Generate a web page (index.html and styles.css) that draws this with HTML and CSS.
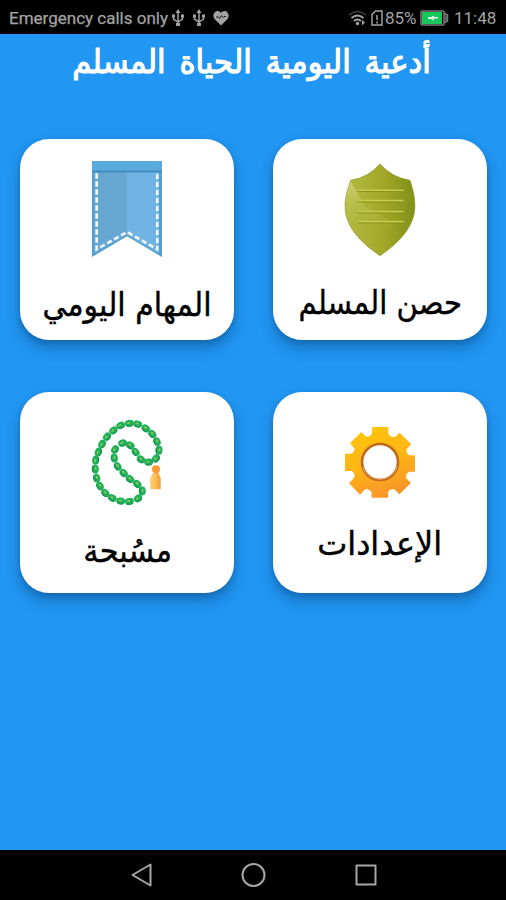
FILE: index.html
```html
<!DOCTYPE html>
<html lang="ar">
<head>
<meta charset="utf-8">
<title>أدعية اليومية الحياة المسلم</title>
<link rel="stylesheet" href="styles.css">
</head>
<body>
<header class="status">
  <span class="carrier">Emergency calls only</span>
  <svg class="usb" width="12" height="18" viewBox="0 0 12 18"><path d="M6 3v13M1.500 7v3L6 13l4.500-3V7" /><path class="fill" d="M6 0l2.500 4h-5zM0 5.500h3v3H0zM9 5.500h3v3H9zM4 14h4v3H4z"/></svg>
  <svg class="usb second" width="12" height="18" viewBox="0 0 12 18"><path d="M6 3v13M1.500 7v3L6 13l4.500-3V7" /><path class="fill" d="M6 0l2.500 4h-5zM0 5.500h3v3H0zM9 5.500h3v3H9zM4 14h4v3H4z"/></svg>
  <svg class="heart" width="16" height="15" viewBox="0 0 16 15"><path class="fill" d="M8 14.500L1.500 8C-1.500 4 2 0 4.500 0 6.500 0 7.500 1 8 2 8.500 1 9.500 0 11.500 0 14 0 17.500 4 14.500 8z"/><path class="pulse" d="M3 6h2.500l1 1.500 2-3L10 6.500l1-1h2"/></svg>
  <svg class="wifi" width="20" height="18" viewBox="0 0 20 18"><path class="dim" d="M1 6Q9.500-1 18 6"/><path class="wave" d="M3.500 9Q9.500 4 15.500 9M6 12q3.500-3 7 0"/><circle class="fill" cx="9.500" cy="14.500" r="1.700"/><path class="fill" d="M14 11l3 2.500-3 3z"/></svg>
  <svg class="sim" width="12" height="16" viewBox="0 0 12 16"><path d="M4.500 1H11v14H1V4.500zM6 5v5M6 11.500v2"/></svg>
  <span class="percent">85%</span>
  <svg class="battery" width="29" height="16" viewBox="0 0 29 16"><rect x="1" y="1" width="23" height="14" rx="1"/><rect class="charge" x="2" y="2" width="20" height="12"/><path class="cap" d="M24 3l2 1v8l-2 1"/><path class="cap" d="M27.500 4v8"/><path class="bolt" d="M8 7h4V5.500l3 1.500h3v1.500h-4v2L11 9H8z"/></svg>
  <span class="clock">11:48</span>
</header>
<main dir="rtl">
  <h1><span>أدعية اليومية الحياة المسلم</span></h1>
  <section class="grid">
    <article class="card shield">
      <svg class="icon" width="72" height="94" viewBox="0 0 216 282">
        <defs>
          <linearGradient id="olive" x1="0" y1="0" x2="1" y2="0"><stop offset="0" stop-color="#b4bb42"/><stop offset=".55" stop-color="#a1a727"/><stop offset="1" stop-color="#809018"/></linearGradient>
          <linearGradient id="shine" x1="0" y1="0" x2="0" y2="1"><stop offset="0" stop-color="#d1d47f" stop-opacity=".8"/><stop offset="1" stop-color="#b4bb42" stop-opacity="0"/></linearGradient>
        </defs>
        <path d="M108 3Q145 44 198 52C208 83 215 112 212 142C205 202 154 247 108 278C62 247 10 202 4 142C1 112 9 83 20 52Q72 44 108 3Z" fill="url(#olive)" stroke="#8a931e" stroke-width="2"/>
        <path d="M20 55L62 130Q115 155 155 195L80 205Q6 175 5 125Q7 82 20 55Z" fill="url(#shine)"/>
        <path d="M41 85h138M41 116h138M41 149h138M41 179h138" stroke="#74801a" stroke-width="4"/>
        <path d="M41 82h138M41 113h138M41 146h138M41 176h138" stroke="#c8cd49" stroke-width="5"/>
      </svg>
      <p><span>حصن المسلم</span></p>
    </article>
    <article class="card ribbon">
      <svg class="icon" width="70" height="96" viewBox="0 0 210 288">
        <path d="M0 0h210v288L105 226 0 288z" fill="#549fcf"/>
        <path d="M5 35h100v186L5 279z" fill="#68a6d2"/>
        <path d="M105 35h94v241L105 221z" fill="#70b3e4"/>
        <path d="M0 0h210v30H0z" fill="#5aaade"/><path d="M0 31h210" stroke="#438dbb" stroke-width="5"/>
        <path d="M14 37v228l91-52 91 52V37" fill="none" stroke="#eff6fb" stroke-width="8" stroke-dasharray="16 8"/>
      </svg>
      <p><span>المهام اليومي</span></p>
    </article>
    <article class="card settings">
      <svg class="icon" width="72" height="72" viewBox="0 0 216 216">
        <defs><linearGradient id="gold" x1=".3" y1="0" x2=".6" y2="1"><stop offset="0" stop-color="#ffc40b"/><stop offset=".5" stop-color="#fdb515"/><stop offset="1" stop-color="#f9932b"/></linearGradient></defs>
        <path fill="url(#gold)" fill-rule="evenodd" d="M84 3h49v18q0 7 10 11 9 3 13-1l11-11 35 35-13 13q-4 4 0 12 3 8 9 8h15v49h-15q-7 0-11 9-3 7 1 12l13 13-35 34-13-13q-5-5-13-1-8 3-8 10v14H83v-14q0-7-9-10-7-4-13 1l-13 14-33-34 14-15q5-5 2-13-4-9-10-9H3V83h17q7 0 10-8 4-7-1-11L18 52l34-34 12 12q5 4 12 1 8-4 8-9zM162 108a54 54 0 1 0-108 0 54 54 0 1 0 108 0z"/>
        <circle cx="108" cy="108" r="54" fill="none" stroke="#be6a1f" stroke-width="8"/>
        <path d="M56 124a55 55 0 0 0 104-3" fill="none" stroke="#eeb071" stroke-width="3"/>
      </svg>
      <p><span>الإعدادات</span></p>
    </article>
    <article class="card beads">
      <svg class="icon" width="74" height="90" viewBox="240 110 222 270">
        <defs>
          <linearGradient id="robe" x1="0" x2="1"><stop offset="0" stop-color="#fbd47c"/><stop offset=".5" stop-color="#fcbd5b"/><stop offset="1" stop-color="#f49a2c"/></linearGradient>
          <g id="bead"><ellipse rx="13.500" ry="10.500" fill="#22ae5c"/><path d="M-9 6Q0 12 9 6" fill="none" stroke="#17924e" stroke-width="3"/><ellipse cx="-2" cy="-1" rx="5" ry="3" fill="#7fcf4c"/></g>
        </defs>
        <use href="#bead" transform="translate(358 129) rotate(-5)"/>
        <use href="#bead" transform="translate(383 131) rotate(17)"/>
        <use href="#bead" transform="translate(407 144) rotate(35)"/>
        <use href="#bead" transform="translate(427 161) rotate(50)"/>
        <use href="#bead" transform="translate(441 184) rotate(68)"/>
        <use href="#bead" transform="translate(447 210) rotate(93)"/>
        <use href="#bead" transform="translate(438 234) rotate(-49)"/>
        <use href="#bead" transform="translate(416 245) rotate(-4)"/>
        <use href="#bead" transform="translate(393 237) rotate(38)"/>
        <use href="#bead" transform="translate(377 215) rotate(53)"/>
        <use href="#bead" transform="translate(361 195) rotate(35)"/>
        <use href="#bead" transform="translate(338 188) rotate(-15)"/>
        <use href="#bead" transform="translate(315 207) rotate(-61)"/>
        <use href="#bead" transform="translate(313 233) rotate(81)"/>
        <use href="#bead" transform="translate(323 258) rotate(58)"/>
        <use href="#bead" transform="translate(341 278) rotate(46)"/>
        <use href="#bead" transform="translate(360 296) rotate(39)"/>
        <use href="#bead" transform="translate(382 311) rotate(44)"/>
        <use href="#bead" transform="translate(397 332) rotate(87)"/>
        <use href="#bead" transform="translate(384 354) rotate(-38)"/>
        <use href="#bead" transform="translate(358 363) rotate(-9)"/>
        <use href="#bead" transform="translate(332 362) rotate(11)"/>
        <use href="#bead" transform="translate(307 353) rotate(28)"/>
        <use href="#bead" transform="translate(286 338) rotate(44)"/>
        <use href="#bead" transform="translate(270 317) rotate(60)"/>
        <use href="#bead" transform="translate(260 293) rotate(75)"/>
        <use href="#bead" transform="translate(256 266) rotate(87)"/>
        <use href="#bead" transform="translate(257 239) rotate(-80)"/>
        <use href="#bead" transform="translate(265 215) rotate(-69)"/>
        <use href="#bead" transform="translate(276 191) rotate(-61)"/>
        <use href="#bead" transform="translate(291 169) rotate(-50)"/>
        <use href="#bead" transform="translate(310 150) rotate(-40)"/>
        <use href="#bead" transform="translate(332 135) rotate(-24)"/>
        <path d="M429 278h17l6 16v33h-32v-33z" fill="url(#robe)"/>
        <circle cx="438" cy="267" r="12" fill="#f99a36"/>
      </svg>
      <p><span>مسُبحة</span></p>
    </article>
  </section>
</main>
<nav class="navbar">
  <svg width="24" height="26" viewBox="0 0 24 26"><path d="M20.500 2.500v21L2.500 13z"/></svg>
  <svg width="26" height="26" viewBox="0 0 26 26"><circle cx="12.500" cy="13" r="11"/></svg>
  <svg width="24" height="26" viewBox="0 0 24 26"><rect x="2.500" y="3.500" width="19" height="19"/></svg>
</nav>
</body>
</html>
```
FILE: styles.css
```css
* { box-sizing: border-box; }
body {
  margin: 0;
  width: 506px;
  height: 900px;
  display: flex;
  flex-direction: column;
  background: #2196f3;
  font-family: "DejaVu Sans", sans-serif;
  overflow: hidden;
}
.status {
  height: 34px;
  flex: none;
  display: flex;
  align-items: center;
  padding: 2px 10px 0 9px;
  background: #000;
  color: #a3a3a3;
  font: 17px Roboto, sans-serif;
  white-space: nowrap;
}
.status svg { flex: none; fill: none; stroke: #a3a3a3; stroke-width: 1.500; }
.status .fill { fill: #a3a3a3; stroke: none; }
.status .dim { stroke: #444; }
.status .wave { stroke-width: 2; }
.carrier { width: 158px; -webkit-text-stroke: .25px #a3a3a3; }
.usb { margin-left: 5px; }
.usb.second { margin-left: 9px; }
.heart { margin-left: 8px; }
.status .pulse { stroke: #222; stroke-width: 1; }
.wifi { margin-left: auto; }
.sim { margin-left: 3px; }
.percent { width: 31px; margin-left: 2px; font-size: 17px; }
.battery { margin-left: 4px; }
.status .battery { stroke: #777; }
.status .charge { fill: #18c55a; stroke: none; }
.status .bolt { fill: #d9f7e4; stroke: none; }
.clock { width: 42px; margin-left: 5px; font-size: 17px; }
main { flex: 1; }
h1 {
  margin: 0;
  height: 105px;
  padding-top: 5px;
  color: #fff;
  font-size: 30px;
  line-height: 46px;
  font-weight: 400;
  text-align: center;
  white-space: nowrap;
}
h1 span {
  display: inline-block;
  word-spacing: 4px;
  transform: translateX(-2px) scale(1.022, 1.08);
  -webkit-text-stroke: 1.100px #fff;
}
.grid {
  display: grid;
  grid-template-columns: 214px 214px;
  grid-auto-rows: 201px;
  gap: 52px 39px;
  padding: 0 19px 0 20px;
}
.card {
  display: flex;
  flex-direction: column;
  align-items: center;
  background: #fff;
  border-radius: 29px;
  box-shadow: 0 8px 14px rgba(0, 40, 80, .32), 0 2px 5px rgba(0, 40, 80, .18);
}
.icon { flex: none; display: block; }
.card p {
  margin: 0;
  color: #000;
  font-size: 30px;
  line-height: 44px;
  white-space: nowrap;
}
.card span {
  display: inline-block;
  transform: scaleY(1.08);
  -webkit-text-stroke: .4px #000;
}
.shield .icon { margin-top: 24px; }
.shield p { margin-top: 24px; }
.shield span { transform: scale(.97, 1.080); }
.ribbon .icon { margin-top: 22px; }
.ribbon p { margin-top: 26px; }
.settings .icon { margin-top: 34px; }
.settings p { margin-top: 24px; }
.settings span { transform: scale(1.065, 1.080); }
.beads .icon { margin-top: 25px; }
.beads p { margin-top: 22px; }
.beads span { transform: translateX(1px) scale(1.015, 1.080); }
.navbar {
  height: 50px;
  flex: none;
  display: flex;
  justify-content: space-between;
  align-items: center;
  padding: 0 128px 0 130px;
  background: #000;
}
.navbar svg { fill: none; stroke: #a6a6a6; stroke-width: 2; stroke-linejoin: round; }
```
